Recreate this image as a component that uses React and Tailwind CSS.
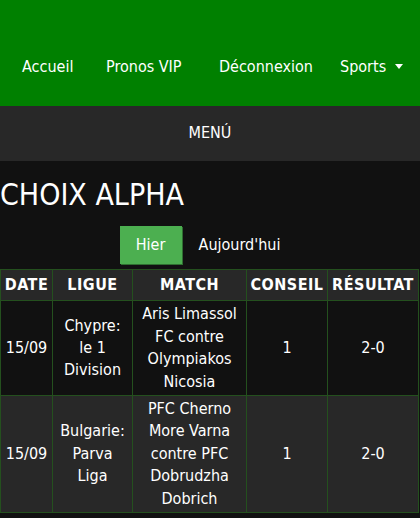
import React from 'react';

const font = { fontFamily: "'DejaVu Sans Condensed', 'Liberation Sans', sans-serif" };

const rows = [
  { date: '15/09', league: 'Chypre: le 1 Division', match: 'Aris Limassol FC contre Olympiakos Nicosia', tip: '1', result: '2-0' },
  { date: '15/09', league: 'Bulgarie: Parva Liga', match: 'PFC Cherno More Varna contre PFC Dobrudzha Dobrich', tip: '1', result: '2-0' },
];

const td = 'border border-[#24501e] px-1 py-[2px] text-center align-middle';
const th = 'border border-[#24501e] px-[2px] py-[4px] text-center align-middle tracking-[0.5px]';

export default function App() {
  return (
    <div className="min-h-[518px] w-[420px] bg-[#111111] text-white text-[16px] leading-[1.4]" style={font}>
      <nav className="h-[106px] bg-[#008000] flex items-end pb-[28px] pl-[22px]">
        <a className="w-[84px] text-white">Accueil</a>
        <a className="w-[113px] text-white">Pronos VIP</a>
        <a className="w-[121px] text-white">Déconnexion</a>
        <a className="text-white flex items-center gap-[9px]">
          Sports
          <svg width="8" height="5" viewBox="0 0 8 5"><path d="M0 0H8L4 5Z" fill="#ffffff" /></svg>
        </a>
      </nav>
      <div className="h-[55px] bg-[#282828] flex items-center justify-center">MENÚ</div>

      <h1 className="text-[30px] leading-[34px] mt-[17px] mb-[14px] font-normal">CHOIX ALPHA</h1>

      <div className="flex justify-center items-center gap-[17px] pr-[20px]">
        <button className="h-[38px] w-[62px] bg-[#4caf50] text-white shadow-[1px_1px_0_#2f6f31]">Hier</button>
        <button className="text-white">Aujourd'hui</button>
      </div>

      <table className="mt-[5px] w-[418px] table-fixed border-collapse">
        <colgroup>
          <col className="w-[52px]" />
          <col className="w-[80px]" />
          <col className="w-[114px]" />
          <col className="w-[81px]" />
          <col className="w-[91px]" />
        </colgroup>
        <thead>
          <tr className="bg-[#282828] font-bold">
            <th className={th}>DATE</th>
            <th className={th}>LIGUE</th>
            <th className={th}>MATCH</th>
            <th className={th}>CONSEIL</th>
            <th className={th}>RÉSULTAT</th>
          </tr>
        </thead>
        <tbody>
          {rows.map((r, i) => (
            <tr key={i} className={i % 2 === 0 ? 'bg-[#111111]' : 'bg-[#282828]'}>
              <td className={td}>{r.date}</td>
              <td className={td}>{r.league}</td>
              <td className={td}>{r.match}</td>
              <td className={td}>{r.tip}</td>
              <td className={td}>{r.result}</td>
            </tr>
          ))}
        </tbody>
      </table>
    </div>
  );
}
